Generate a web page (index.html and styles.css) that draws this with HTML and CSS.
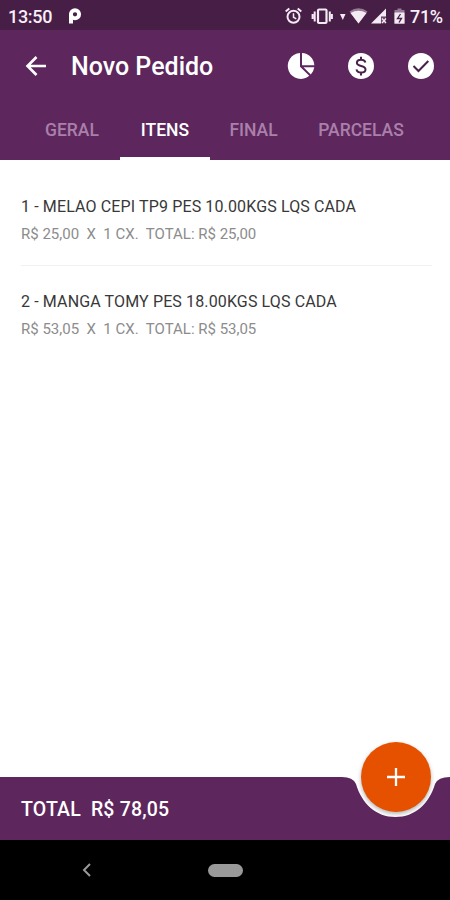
FILE: index.html
```html
<!DOCTYPE html>
<html lang="pt-BR">
<head>
<meta charset="utf-8">
<title>Novo Pedido</title>
<link rel="stylesheet" href="styles.css">
</head>
<body>
<div class="screen">
  <div class="status">
    <span class="clock">13:50</span>
    <svg class="pie-logo" width="15" height="16" viewBox="0 0 15 16"><circle cx="8" cy="6.300" r="4.100" fill="none" stroke="#fff" stroke-width="3.900"/><path d="M2 6v9.500h4v-4z" fill="#fff"/></svg>
    <svg class="status-icons" width="124" height="20" viewBox="0 0 124 20" fill="#f4eaf4">
      <g fill="none" stroke="#f4eaf4">
        <circle cx="10.5" cy="10.8" r="6" stroke-width="2"/>
        <path d="M10.5 7.2v4l2.8 1.6" stroke-width="1.5"/>
        <path d="M2.700 5.400l3.600-3M18.300 5.400l-3.600-3" stroke-width="2"/>
        <rect x="35" y="3.5" width="8.500" height="13.500" rx="1" stroke-width="2.200"/>
        <path d="M31.700 5.500v10M46.800 5.500v10M29.600 8v5M48.900 8v5" stroke-width="2"/>
      </g>
      <path d="M57 8h5.500l-2.700 6z"/>
      <path d="M66.500 5.500q9-6.500 18 0l-9 12z" opacity=".45"/>
      <path d="M67.500 7q8-4.500 16 0l-8 10.500z"/>
      <path d="M88 17.500l15-15v8h-5v7z"/>
      <path d="M103 2.500v15h-5v-7h5z" opacity=".22"/>
      <path d="M99 12.500l4 4.500m0-4.500l-4 4.500" stroke="#f4eaf4" stroke-width="1.200"/>
      <path d="M114.500 2.500h4v1.500h3v14h-10v-14h3z" opacity=".45"/>
      <path d="M111.500 6.500h10v11h-10z"/>
      <path d="M117.500 8l-3 4.500h4l-2.500 4" fill="none" stroke="#471e46" stroke-width="1.300"/>
    </svg>
    <span class="battery">71%</span>
  </div>
  <header class="toolbar">
    <svg class="back" width="22" height="22" viewBox="0 0 22 22" fill="none" stroke="#fff" stroke-width="2.600"><path d="M21 11H2.500M11.500 2L2.500 11l9 9"/></svg>
    <h1 class="title">Novo Pedido</h1>
    <div class="actions">
      <svg width="28" height="28" viewBox="0 0 28 28" fill="#fff"><path d="M13 1A13 13 0 1 0 22.300 23.800L13 14.800z"/><path d="M15 .9V13.200H27.300A13 13 0 0 0 15 .9z"/><path d="M16.500 15.200H27.300a13 13 0 0 1-3.500 7.200z"/></svg>
      <svg width="28" height="28" viewBox="0 0 28 28"><circle cx="14" cy="14" r="13" fill="#fff"/><path d="M18.400 10.500C18 8.700 16.400 7.700 14.100 7.700c-2.500 0-4.200 1.200-4.200 3 0 4.400 8.600 2.200 8.600 6.700 0 1.900-1.700 3.100-4.300 3.100-2.700 0-4.400-1.100-4.700-3.200M14 4.700v3M14 20.500v3" fill="none" stroke="#49204a" stroke-width="2"/></svg>
      <svg width="28" height="28" viewBox="0 0 28 28"><circle cx="14" cy="14" r="13" fill="#fff"/><path d="M6.500 14l5 5L21.300 9" fill="none" stroke="#49204a" stroke-width="2"/></svg>
    </div>
  </header>
  <nav class="tabs">
    <span class="tab geral">GERAL</span>
    <span class="tab active">ITENS</span>
    <span class="tab final">FINAL</span>
    <span class="tab parcelas">PARCELAS</span>
  </nav>
  <main class="list">
    <article class="item">
      <p class="name">1 - MELAO CEPI TP9 PES 10.00KGS LQS CADA</p>
      <p class="detail">R$ 25,00&nbsp; X&nbsp; 1 CX.&nbsp; TOTAL: R$ 25,00</p>
    </article>
    <article class="item">
      <p class="name">2 - MANGA TOMY PES 18.00KGS LQS CADA</p>
      <p class="detail">R$ 53,05&nbsp; X&nbsp; 1 CX.&nbsp; TOTAL: R$ 53,05</p>
    </article>
  </main>
  <footer class="total">
    <svg class="total-bg" width="450" height="63" viewBox="0 0 450 63"><path d="M0 0H342Q353 0 356 7C362 27 376 40 395.500 40S429 27 435 7Q438 0 450 0V63H0z" fill="#5d275d"/></svg>
    <span class="total-text">TOTAL&nbsp; R$ 78,05</span>
    <button class="fab" aria-label="Adicionar"><svg width="18" height="18" viewBox="0 0 18 18"><path d="M9 0v18M0 9h18" stroke="#fff" stroke-width="2.300"/></svg></button>
  </footer>
  <div class="navbar">
    <svg class="nav-back" width="10" height="14" viewBox="0 0 10 14"><path d="M8 1L2 7l6 6" fill="none" stroke="#999" stroke-width="2"/></svg>
    <span class="pill"></span>
  </div>
</div>
</body>
</html>
```
FILE: styles.css
```css
* { box-sizing: border-box; margin: 0; padding: 0; }
body { font-family: Roboto, sans-serif; background: #fff; }
svg { display: block; flex: none; }
.screen { width: 450px; height: 900px; display: flex; flex-direction: column; overflow: hidden; }
.status { height: 30px; background: #471e46; color: #f8eff8; display: flex; align-items: center; padding: 2px 7px 0 8px; font-size: 18px; font-weight: 500; }
.clock { width: 59px; letter-spacing: -.3px; }
.status-icons { margin-left: 201px; }
.battery { margin-left: 3px; letter-spacing: -.3px; }
.toolbar { height: 70px; background: #5d275d; color: #fff; display: flex; align-items: center; padding: 2px 15.500px 0 24.500px; }
.title { margin-left: 24.500px; font-size: 25px; line-height: 30px; padding-top: 1px; font-weight: 500; white-space: nowrap; }
.actions { margin-left: auto; display: flex; gap: 32px; }
.tabs { height: 60px; background: #5d275d; display: flex; color: #aa80ab; font-size: 17.500px; font-weight: 500; }
.tab { display: flex; align-items: center; justify-content: center; border-bottom: 3px solid transparent; padding-top: 2px; }
.geral { width: 96px; margin-left: 24px; }
.active { width: 90px; color: #fff; border-color: #fff; }
.final { width: 87px; }
.parcelas { width: 128px; }
.list { flex: 1; padding: 0 18px 0 21px; }
.item { height: 95px; padding-top: 37px; white-space: nowrap; }
.item:first-child { height: 106px; border-bottom: 1px solid #f0f0f0; }
.item + .item { padding-top: 26px; }
.name { font-size: 16px; line-height: 20px; letter-spacing: .13px; color: #383838; }
.detail { font-size: 15px; line-height: 18px; margin-top: 8px; color: #8c8c8c; }
.total { height: 63px; position: relative; display: flex; align-items: center; padding-left: 21px; color: #fff; }
.total-bg { position: absolute; left: 0; top: 0; }
.total-text { position: relative; padding-top: 1px; font-size: 19.500px; letter-spacing: .17px; font-weight: 500; }
.fab { position: absolute; left: 360.500px; top: -35.500px; width: 70px; height: 70px; border: 0; border-radius: 50%; background: #e65100; display: flex; align-items: center; justify-content: center; box-shadow: 0 2px 4px rgba(0,0,0,.3); }
.navbar { height: 60px; background: #000; display: flex; align-items: center; padding-left: 82px; }
.pill { width: 35px; height: 13px; border-radius: 7px; background: #999; margin-left: 116px; }
```
